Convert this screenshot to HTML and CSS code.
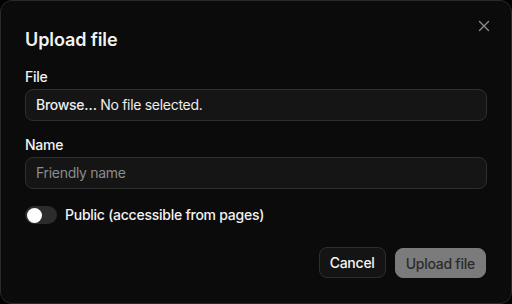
FILE: index.html
```html
<!DOCTYPE html>
<html lang="en">
<head>
<meta charset="utf-8">
<link rel="stylesheet" href="styles.css">
</head>
<body>
<div class="dialog">
  <button class="close" aria-label="Close">
    <svg width="12" height="12" viewBox="0 0 12 12"><path d="M1.5 1.5 L10.5 10.5 M10.5 1.5 L1.5 10.5" stroke="#8a8a8a" stroke-width="1.4" stroke-linecap="round"/></svg>
  </button>
  <h1 class="title">Upload file</h1>
  <div class="field">
    <label class="label">File</label>
    <div class="input file-input"><span class="browse">Browse…</span> No file selected.</div>
  </div>
  <div class="field">
    <label class="label">Name</label>
    <div class="input placeholder">Friendly name</div>
  </div>
  <div class="toggle-row">
    <span class="toggle"><span class="knob"></span></span>
    <span class="toggle-label">Public (accessible from pages)</span>
  </div>
  <div class="actions">
    <button class="btn btn-cancel">Cancel</button>
    <button class="btn btn-upload">Upload file</button>
  </div>
</div>
</body>
</html>
```

FILE: styles.css
```css
html, body {
  margin: 0;
  padding: 0;
  background: #000;
}
.dialog {
  position: relative;
  box-sizing: border-box;
  width: 512px;
  height: 304px;
  background: #0b0b0b;
  border: 1px solid #2a2a2a;
  border-radius: 12px;
  padding: 25px 24px 25px 24px;
  font-family: Inter, "Noto Sans", sans-serif;
  color: #f2f2f2;
  display: flex;
  flex-direction: column;
}
.close {
  position: absolute;
  top: 19px;
  right: 21px;
  background: none;
  border: 0;
  padding: 0;
  width: 12px;
  height: 12px;
  display: flex;
}
.title {
  margin: 0 0 13px 0;
  font-size: 18px;
  line-height: 28px;
  font-weight: 600;
  letter-spacing: -0.1px;
}
.field {
  display: flex;
  flex-direction: column;
  gap: 2px;
  margin-bottom: 14px;
}
.label {
  font-size: 14px;
  line-height: 20px;
  font-weight: 500;
  letter-spacing: -0.25px;
}
.input {
  box-sizing: border-box;
  height: 32px;
  border: 1px solid #2e2e2e;
  border-radius: 8px;
  background: #151515;
  padding: 0 10px;
  font-size: 14px;
  line-height: 30px;
  color: #ededed;
  letter-spacing: -0.3px;
}
.browse {
  font-weight: 500;
}
.placeholder {
  color: #8c8c8c;
}
.toggle-row {
  display: flex;
  align-items: center;
  gap: 8px;
  margin-top: 2px;
  height: 20px;
}
.toggle {
  box-sizing: border-box;
  width: 32px;
  height: 18px;
  border-radius: 9px;
  background: #2c2c2c;
  padding: 1.5px;
  display: flex;
}
.knob {
  width: 15px;
  height: 15px;
  border-radius: 50%;
  background: #fff;
}
.toggle-label {
  font-size: 14px;
  font-weight: 500;
  line-height: 20px;
  letter-spacing: -0.25px;
}
.actions {
  margin-top: auto;
  display: flex;
  justify-content: flex-end;
  gap: 9px;
  align-items: center;
}
.btn {
  font-family: Inter, "Noto Sans", sans-serif;
  font-size: 14px;
  font-weight: 500;
  height: 31px;
  border-radius: 8px;
  padding: 0 10px;
  line-height: 29px;
  letter-spacing: -0.25px;
}
.btn-cancel {
  background: #141414;
  color: #f5f5f5;
  border: 1px solid #2e2e2e;
}
.btn-upload {
  background: #7b7b7b;
  color: #2b2b2b;
  border: 1px solid #7b7b7b;
  height: 30px;
  margin-right: 1px;
}
```
